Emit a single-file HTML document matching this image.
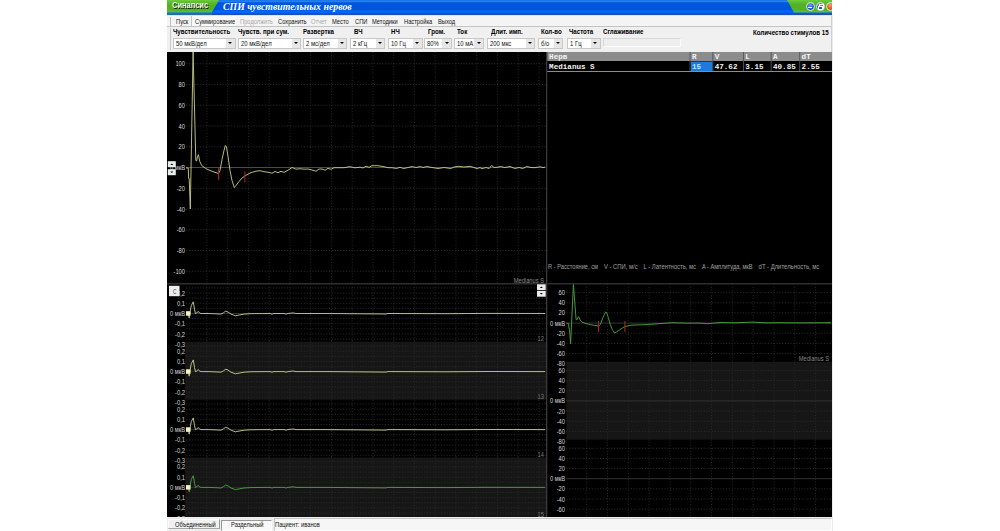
<!DOCTYPE html>
<html><head><meta charset="utf-8"><style>
html,body{margin:0;padding:0;background:#fff;width:1000px;height:531px;overflow:hidden;position:relative;font-family:"Liberation Sans",sans-serif}
.abs{position:absolute}
.lbl{font-family:"Liberation Sans",sans-serif}
.mono{font-family:"Liberation Mono",monospace;font-weight:bold;font-size:7.6px}
.t{position:absolute;white-space:nowrap;transform-origin:0 0;line-height:1}
.menu{font-size:7px;color:#111;transform:scaleX(.82)}
.dis{color:#a8a8a8}
.cl{font-size:7px;font-weight:bold;color:#000;transform:scaleX(.88)}
.combo{position:absolute;top:38.4px;height:10.2px;background:#fff;box-sizing:border-box;border:1px solid #c8c8c8}
.combo .v{position:absolute;left:2px;top:0.8px;font-size:7px;color:#111;white-space:nowrap;transform-origin:0 0;transform:scaleX(.85)}
.combo .b{position:absolute;right:0;top:0;width:8.5px;height:8.2px;background:#e6e6e6}
.combo .b:after{content:"";position:absolute;left:2.2px;top:3px;border-left:2.1px solid transparent;border-right:2.1px solid transparent;border-top:2.6px solid #000}
</style></head><body>
<div class="abs" style="left:167px;top:0;width:665px;height:531px;background:#f0f0f0"></div><div class="abs" style="left:167px;top:0;width:665px;height:12.5px;background:linear-gradient(#1a74e2 0px,#2480f2 1.5px,#0056de 2.8px,#0054dc 9.5px,#0066fa 11px,#0064f6 12.5px)"></div><div class="abs" style="left:167px;top:12.5px;width:665px;height:2px;background:#2050b4"></div><div class="abs" style="left:167px;top:12.5px;width:45px;height:2px;background:#2a6aa8"></div><div class="abs" style="left:167px;top:14.5px;width:665px;height:1px;background:#dce2f4"></div><div class="abs" style="left:167px;top:0;width:52px;height:12.5px;background:linear-gradient(#6ccc40 0px,#5cc030 2px,#52b024 5px,#54b226 10px,#66c040 12.5px);clip-path:polygon(0 0,100% 0,86% 100%,0 100%)"></div><div class="abs" style="left:787px;top:0;width:45px;height:12.5px;background:linear-gradient(#6ccc40 0px,#5cc030 2px,#52b024 5px,#54b226 10px,#66c040 12.5px);clip-path:polygon(0 0,100% 0,100% 100%,15.5% 100%)"></div><div class="t" style="left:171.7px;top:0.8px;font-size:8.6px;font-weight:bold;color:#f6ffe8;text-shadow:0.9px 0.9px 0 #081400;transform:scaleX(0.87)">Синапсис</div><div class="t" style="left:223px;top:2.2px;font-family:'Liberation Serif',serif;font-size:9.8px;font-style:italic;font-weight:bold;color:#fff">СПИ чувствительных нервов</div><div class="abs" style="left:805.5px;top:2.2px;width:9px;height:9px;box-sizing:border-box;border-radius:50%;background:radial-gradient(circle at 45% 30%,#6f9cf5,#1d4fc8 70%);border:0.8px solid #d6f0d0"></div><div class="abs" style="left:816px;top:2.2px;width:9px;height:9px;box-sizing:border-box;border-radius:50%;background:radial-gradient(circle at 45% 30%,#6f9cf5,#1d4fc8 70%);border:0.8px solid #d6f0d0"></div><div class="abs" style="left:825.5px;top:2.2px;width:9px;height:9px;box-sizing:border-box;border-radius:50%;background:radial-gradient(circle at 45% 30%,#f2a070,#d2501c 70%);border:0.8px solid #d6f0d0"></div><div class="abs" style="left:808px;top:7.2px;width:4px;height:1.2px;background:#fff"></div><div class="abs" style="left:819.2px;top:4.4px;width:2.6px;height:2.2px;border:0.7px solid #fff;border-top-width:1px"></div><div class="abs" style="left:818px;top:5.8px;width:2.6px;height:2.2px;border:0.7px solid #fff;border-top-width:1px;background:#2556c8"></div><div class="abs" style="left:832px;top:0;width:168px;height:531px;background:#fff"></div><div class="abs" style="left:167px;top:15.5px;width:665px;height:11px;background:#f4f4f4"></div><div class="abs" style="left:167px;top:26.3px;width:665px;height:1px;background:#c4c4c4"></div><div class="abs" style="left:170.3px;top:16.5px;width:1px;height:9px;background:#c0c0c0"></div><div class="abs" style="left:191.3px;top:15.5px;width:44.7px;height:10.8px;box-sizing:border-box;background:#f9f9f9;border-left:1px solid #c4c4c4;border-right:1px solid #fdfdfd"></div><div class="t menu" style="left:176px;top:18px">Пуск</div><div class="t menu" style="left:195px;top:18px">Суммирование</div><div class="t menu dis" style="left:240px;top:18px">Продолжить</div><div class="t menu" style="left:278px;top:18px">Сохранить</div><div class="t menu dis" style="left:310.7px;top:18px">Отчет</div><div class="t menu" style="left:331.8px;top:18px">Место</div><div class="t menu" style="left:354.6px;top:18px">СПИ</div><div class="t menu" style="left:372px;top:18px">Методики</div><div class="t menu" style="left:404.2px;top:18px">Настройка</div><div class="t menu" style="left:437.9px;top:18px">Выход</div><div class="abs" style="left:170.3px;top:28px;width:1px;height:22px;background:#c8c8c8"></div><div class="t cl" style="left:173.2px;top:28.2px">Чувствительность</div><div class="t cl" style="left:238px;top:28.2px">Чувств. при сум.</div><div class="t cl" style="left:303px;top:28.2px">Развертка</div><div class="t cl" style="left:353.8px;top:28.2px">ВЧ</div><div class="t cl" style="left:390.9px;top:28.2px">НЧ</div><div class="t cl" style="left:428.3px;top:28.2px">Гром.</div><div class="t cl" style="left:457.2px;top:28.2px">Ток</div><div class="t cl" style="left:491px;top:28.2px">Длит. имп.</div><div class="t cl" style="left:540.7px;top:28.2px">Кол-во</div><div class="t cl" style="left:568.6px;top:28.2px">Частота</div><div class="t cl" style="left:603px;top:28.2px">Сглаживание</div><div class="combo" style="left:173.2px;width:62.4px"><div class="v">50 мкВ/дел</div><div class="b"></div></div><div class="combo" style="left:238px;width:63px"><div class="v">20 мкВ/дел</div><div class="b"></div></div><div class="combo" style="left:303px;width:44px"><div class="v">2 мс/дел</div><div class="b"></div></div><div class="combo" style="left:350px;width:35.3px"><div class="v">2 кГц</div><div class="b"></div></div><div class="combo" style="left:387.5px;width:35.2px"><div class="v">10 Гц</div><div class="b"></div></div><div class="combo" style="left:424.4px;width:27.6px"><div class="v">80%</div><div class="b"></div></div><div class="combo" style="left:454.1px;width:29.9px"><div class="v">10 мА</div><div class="b"></div></div><div class="combo" style="left:487px;width:48px"><div class="v">200 мкс</div><div class="b"></div></div><div class="combo" style="left:537.6px;width:25.9px"><div class="v">б/о</div><div class="b"></div></div><div class="combo" style="left:566.5px;width:34px"><div class="v">1 Гц</div><div class="b"></div></div><div class="abs" style="left:603px;top:38.4px;width:78px;height:9px;box-sizing:border-box;border:1px solid #d8d8d8;border-right-color:#fafafa;border-bottom-color:#fafafa;background:#eeeeee"></div><div class="t cl" style="left:752.6px;top:28.7px">Количество стимулов 15</div><div class="abs" style="left:831px;top:14.5px;width:1px;height:37.5px;background:#d0d0d0"></div><svg width="1000" height="531" viewBox="0 0 1000 531" style="position:absolute;left:0;top:0"><rect x="167" y="52" width="665" height="465" fill="#000"/><path d="M206.95,52V282.5M227.7,52V282.5M248.45,52V282.5M269.2,52V282.5M289.95,52V282.5M310.7,52V282.5M331.45,52V282.5M352.2,52V282.5M372.95,52V282.5M393.7,52V282.5M414.45,52V282.5M435.2,52V282.5M455.95,52V282.5M476.7,52V282.5M497.45,52V282.5M518.2,52V282.5M538.95,52V282.5" stroke="#282828" stroke-width="1" stroke-dasharray="1,1.8" fill="none"/><path d="M186.2,271.25H546" stroke="#282828" stroke-width="1" stroke-dasharray="1.2,1.6" fill="none"/><path d="M186.2,250.5H546" stroke="#282828" stroke-width="1" stroke-dasharray="1.2,1.6" fill="none"/><path d="M186.2,229.75H546" stroke="#282828" stroke-width="1" stroke-dasharray="1.2,1.6" fill="none"/><path d="M186.2,209H546" stroke="#282828" stroke-width="1" stroke-dasharray="1.2,1.6" fill="none"/><path d="M186.2,188.25H546" stroke="#282828" stroke-width="1" stroke-dasharray="1.2,1.6" fill="none"/><path d="M186.2,167.5H546" stroke="#4a4a4a" stroke-width="1"  fill="none"/><path d="M186.2,146.75H546" stroke="#282828" stroke-width="1" stroke-dasharray="1.2,1.6" fill="none"/><path d="M186.2,126H546" stroke="#282828" stroke-width="1" stroke-dasharray="1.2,1.6" fill="none"/><path d="M186.2,105.25H546" stroke="#282828" stroke-width="1" stroke-dasharray="1.2,1.6" fill="none"/><path d="M186.2,84.5H546" stroke="#282828" stroke-width="1" stroke-dasharray="1.2,1.6" fill="none"/><path d="M186.2,63.75H546" stroke="#282828" stroke-width="1" stroke-dasharray="1.2,1.6" fill="none"/><text x="185" y="66.25" text-anchor="end" class="lbl" fill="#d8d8d8" font-size="7" textLength="9.58" lengthAdjust="spacingAndGlyphs">100</text><text x="185" y="87" text-anchor="end" class="lbl" fill="#d8d8d8" font-size="7" textLength="6.38" lengthAdjust="spacingAndGlyphs">80</text><text x="185" y="107.75" text-anchor="end" class="lbl" fill="#d8d8d8" font-size="7" textLength="6.38" lengthAdjust="spacingAndGlyphs">60</text><text x="185" y="128.5" text-anchor="end" class="lbl" fill="#d8d8d8" font-size="7" textLength="6.38" lengthAdjust="spacingAndGlyphs">40</text><text x="185" y="149.25" text-anchor="end" class="lbl" fill="#d8d8d8" font-size="7" textLength="6.38" lengthAdjust="spacingAndGlyphs">20</text><text x="185" y="190.75" text-anchor="end" class="lbl" fill="#d8d8d8" font-size="7" textLength="8.3" lengthAdjust="spacingAndGlyphs">-20</text><text x="185" y="211.5" text-anchor="end" class="lbl" fill="#d8d8d8" font-size="7" textLength="8.3" lengthAdjust="spacingAndGlyphs">-40</text><text x="185" y="232.25" text-anchor="end" class="lbl" fill="#d8d8d8" font-size="7" textLength="8.3" lengthAdjust="spacingAndGlyphs">-60</text><text x="185" y="253" text-anchor="end" class="lbl" fill="#d8d8d8" font-size="7" textLength="8.3" lengthAdjust="spacingAndGlyphs">-80</text><text x="185" y="273.75" text-anchor="end" class="lbl" fill="#d8d8d8" font-size="7" textLength="11.49" lengthAdjust="spacingAndGlyphs">-100</text><text x="185" y="170" text-anchor="end" class="lbl" fill="#d8d8d8" font-size="7" textLength="15.07" lengthAdjust="spacingAndGlyphs">0 мкВ</text><path d="M186,167.8 L188.3,168.1 L188.6,178.4 L189.2,178.5 L190.3,209 L193.1,52 L195.8,160.5 L196.6,161 L197.5,156.5 L198.4,154.7 L199.8,161.5 L201.7,165.5 L205.7,168.5 L210,170.5 L214,172 L218.6,173.5 L220,170.5 L222,159.5 L224,150.5 L225.3,145.5 L226.5,147 L228,156.5 L230,170.5 L232,180.5 L234.3,187.5 L236,185.5 L239,181.5 L242,178 L244.8,176 L250,173 L256,171.2 L260,170.7 L264,171.7 L268,172.2 L272,173.2 L275,171.5 L278,172.7 L281,171.3 L284,172.3 L288,170.2 L292,167.5 L296,169.2 L300,168.7 L304,169.2 L308,169 L311,169.7 L316,171.2 L319,169 L322,169 L325,170.3 L328,168.3 L331,169.3 L334,167.7 L344,167.7 L350,166.7 L355,167.8 L360,167.2 L363,168 L366,166.2 L369,167.3 L372,165.7 L378,165.7 L384,166.7 L388,167.7 L392,167.7 L396.4,168.5 L400,167.3 L403.6,168.5 L408,167.5 L412.4,166.5 L416,167.5 L420.4,166.5 L423,167.5 L426.8,166.5 L432,167.5 L438,168.5 L444,167.5 L450.8,168.5 L454,167 L458.8,166.3 L464,167 L470,166.3 L474,167.5 L477.2,168.7 L480,167.5 L482,168.7 L486,167.5 L489.2,168.5 L491.6,165.5 L494,167.5 L497,167.3 L500.4,166.5 L505,167.5 L510,166.5 L514.8,168.5 L519,167.5 L522.8,168.5 L526.8,166.5 L531,167.5 L535,167.7 L540.4,166.7 L543,167.7 L545,167" stroke="#c4c484" stroke-width="0.95" fill="none" stroke-linejoin="round"/><path d="M218.6,168V180M244.9,171.5V182.5" stroke="#9a2828" stroke-width="1.1"/><text x="544" y="283" text-anchor="end" class="lbl" fill="#8a8a8a" font-size="7" textLength="30.31" lengthAdjust="spacingAndGlyphs">Medianus S</text><rect x="167" y="283" width="379" height="1.5" fill="#2e2e2e"/><rect x="185.2" y="341.7" width="360.8" height="58.1" fill="#161616"/><rect x="185.2" y="457.5" width="360.8" height="59.5" fill="#161616"/><path d="M206.95,284V341.7M227.7,284V341.7M248.45,284V341.7M269.2,284V341.7M289.95,284V341.7M310.7,284V341.7M331.45,284V341.7M352.2,284V341.7M372.95,284V341.7M393.7,284V341.7M414.45,284V341.7M435.2,284V341.7M455.95,284V341.7M476.7,284V341.7M497.45,284V341.7M518.2,284V341.7M538.95,284V341.7" stroke="#282828" stroke-width="1" stroke-dasharray="1,1.8" fill="none"/><path d="M186.2,287.9H546" stroke="#282828" stroke-width="1" stroke-dasharray="1.2,1.6" fill="none"/><path d="M186.2,293.02H546" stroke="#282828" stroke-width="1" stroke-dasharray="1.2,1.6" fill="none"/><path d="M186.2,298.14H546" stroke="#282828" stroke-width="1" stroke-dasharray="1.2,1.6" fill="none"/><path d="M186.2,303.26H546" stroke="#282828" stroke-width="1" stroke-dasharray="1.2,1.6" fill="none"/><path d="M186.2,308.38H546" stroke="#282828" stroke-width="1" stroke-dasharray="1.2,1.6" fill="none"/><path d="M186.2,318.62H546" stroke="#282828" stroke-width="1" stroke-dasharray="1.2,1.6" fill="none"/><path d="M186.2,323.74H546" stroke="#282828" stroke-width="1" stroke-dasharray="1.2,1.6" fill="none"/><path d="M186.2,328.86H546" stroke="#282828" stroke-width="1" stroke-dasharray="1.2,1.6" fill="none"/><path d="M186.2,333.98H546" stroke="#282828" stroke-width="1" stroke-dasharray="1.2,1.6" fill="none"/><path d="M186.2,339.1H546" stroke="#282828" stroke-width="1" stroke-dasharray="1.2,1.6" fill="none"/><path d="M186.2,313.5H546" stroke="#2e2e2e" stroke-width="1"  fill="none"/><path d="M206.95,341.7V399.8M227.7,341.7V399.8M248.45,341.7V399.8M269.2,341.7V399.8M289.95,341.7V399.8M310.7,341.7V399.8M331.45,341.7V399.8M352.2,341.7V399.8M372.95,341.7V399.8M393.7,341.7V399.8M414.45,341.7V399.8M435.2,341.7V399.8M455.95,341.7V399.8M476.7,341.7V399.8M497.45,341.7V399.8M518.2,341.7V399.8M538.95,341.7V399.8" stroke="#282828" stroke-width="1" stroke-dasharray="1,1.8" fill="none"/><path d="M186.2,346H546" stroke="#282828" stroke-width="1" stroke-dasharray="1.2,1.6" fill="none"/><path d="M186.2,351.12H546" stroke="#282828" stroke-width="1" stroke-dasharray="1.2,1.6" fill="none"/><path d="M186.2,356.24H546" stroke="#282828" stroke-width="1" stroke-dasharray="1.2,1.6" fill="none"/><path d="M186.2,361.36H546" stroke="#282828" stroke-width="1" stroke-dasharray="1.2,1.6" fill="none"/><path d="M186.2,366.48H546" stroke="#282828" stroke-width="1" stroke-dasharray="1.2,1.6" fill="none"/><path d="M186.2,376.72H546" stroke="#282828" stroke-width="1" stroke-dasharray="1.2,1.6" fill="none"/><path d="M186.2,381.84H546" stroke="#282828" stroke-width="1" stroke-dasharray="1.2,1.6" fill="none"/><path d="M186.2,386.96H546" stroke="#282828" stroke-width="1" stroke-dasharray="1.2,1.6" fill="none"/><path d="M186.2,392.08H546" stroke="#282828" stroke-width="1" stroke-dasharray="1.2,1.6" fill="none"/><path d="M186.2,397.2H546" stroke="#282828" stroke-width="1" stroke-dasharray="1.2,1.6" fill="none"/><path d="M186.2,371.6H546" stroke="#2e2e2e" stroke-width="1"  fill="none"/><path d="M206.95,399.8V457.5M227.7,399.8V457.5M248.45,399.8V457.5M269.2,399.8V457.5M289.95,399.8V457.5M310.7,399.8V457.5M331.45,399.8V457.5M352.2,399.8V457.5M372.95,399.8V457.5M393.7,399.8V457.5M414.45,399.8V457.5M435.2,399.8V457.5M455.95,399.8V457.5M476.7,399.8V457.5M497.45,399.8V457.5M518.2,399.8V457.5M538.95,399.8V457.5" stroke="#282828" stroke-width="1" stroke-dasharray="1,1.8" fill="none"/><path d="M186.2,404H546" stroke="#282828" stroke-width="1" stroke-dasharray="1.2,1.6" fill="none"/><path d="M186.2,409.12H546" stroke="#282828" stroke-width="1" stroke-dasharray="1.2,1.6" fill="none"/><path d="M186.2,414.24H546" stroke="#282828" stroke-width="1" stroke-dasharray="1.2,1.6" fill="none"/><path d="M186.2,419.36H546" stroke="#282828" stroke-width="1" stroke-dasharray="1.2,1.6" fill="none"/><path d="M186.2,424.48H546" stroke="#282828" stroke-width="1" stroke-dasharray="1.2,1.6" fill="none"/><path d="M186.2,434.72H546" stroke="#282828" stroke-width="1" stroke-dasharray="1.2,1.6" fill="none"/><path d="M186.2,439.84H546" stroke="#282828" stroke-width="1" stroke-dasharray="1.2,1.6" fill="none"/><path d="M186.2,444.96H546" stroke="#282828" stroke-width="1" stroke-dasharray="1.2,1.6" fill="none"/><path d="M186.2,450.08H546" stroke="#282828" stroke-width="1" stroke-dasharray="1.2,1.6" fill="none"/><path d="M186.2,455.2H546" stroke="#282828" stroke-width="1" stroke-dasharray="1.2,1.6" fill="none"/><path d="M186.2,429.6H546" stroke="#2e2e2e" stroke-width="1"  fill="none"/><path d="M206.95,457.5V517M227.7,457.5V517M248.45,457.5V517M269.2,457.5V517M289.95,457.5V517M310.7,457.5V517M331.45,457.5V517M352.2,457.5V517M372.95,457.5V517M393.7,457.5V517M414.45,457.5V517M435.2,457.5V517M455.95,457.5V517M476.7,457.5V517M497.45,457.5V517M518.2,457.5V517M538.95,457.5V517" stroke="#282828" stroke-width="1" stroke-dasharray="1,1.8" fill="none"/><path d="M186.2,461.8H546" stroke="#282828" stroke-width="1" stroke-dasharray="1.2,1.6" fill="none"/><path d="M186.2,466.92H546" stroke="#282828" stroke-width="1" stroke-dasharray="1.2,1.6" fill="none"/><path d="M186.2,472.04H546" stroke="#282828" stroke-width="1" stroke-dasharray="1.2,1.6" fill="none"/><path d="M186.2,477.16H546" stroke="#282828" stroke-width="1" stroke-dasharray="1.2,1.6" fill="none"/><path d="M186.2,482.28H546" stroke="#282828" stroke-width="1" stroke-dasharray="1.2,1.6" fill="none"/><path d="M186.2,492.52H546" stroke="#282828" stroke-width="1" stroke-dasharray="1.2,1.6" fill="none"/><path d="M186.2,497.64H546" stroke="#282828" stroke-width="1" stroke-dasharray="1.2,1.6" fill="none"/><path d="M186.2,502.76H546" stroke="#282828" stroke-width="1" stroke-dasharray="1.2,1.6" fill="none"/><path d="M186.2,507.88H546" stroke="#282828" stroke-width="1" stroke-dasharray="1.2,1.6" fill="none"/><path d="M186.2,513H546" stroke="#282828" stroke-width="1" stroke-dasharray="1.2,1.6" fill="none"/><path d="M186.2,487.4H546" stroke="#2e2e2e" stroke-width="1"  fill="none"/><text x="185" y="295.5" text-anchor="end" class="lbl" fill="#d8d8d8" font-size="7" textLength="7.98" lengthAdjust="spacingAndGlyphs">0,2</text><text x="185" y="305.75" text-anchor="end" class="lbl" fill="#d8d8d8" font-size="7" textLength="7.98" lengthAdjust="spacingAndGlyphs">0,1</text><text x="185" y="326.25" text-anchor="end" class="lbl" fill="#d8d8d8" font-size="7" textLength="9.89" lengthAdjust="spacingAndGlyphs">-0,1</text><text x="185" y="336.5" text-anchor="end" class="lbl" fill="#d8d8d8" font-size="7" textLength="9.89" lengthAdjust="spacingAndGlyphs">-0,2</text><text x="185" y="346.75" text-anchor="end" class="lbl" fill="#d8d8d8" font-size="7" textLength="9.89" lengthAdjust="spacingAndGlyphs">-0,3</text><text x="185" y="316" text-anchor="end" class="lbl" fill="#d8d8d8" font-size="7" textLength="15.07" lengthAdjust="spacingAndGlyphs">0 мкВ</text><text x="544" y="341.2" text-anchor="end" class="lbl" fill="#7a7a7a" font-size="7" textLength="6.38" lengthAdjust="spacingAndGlyphs">12</text><path d="M186,313.5 L187.5,313.5 L188.5,314.5 L189.2,318 L190.2,311.5 L191.3,305.5 L193.3,301.8 L194.5,309.5 L195.5,313.7 L196.2,313.2 L198.4,311.5 L199.5,313 L201,313.5 L208,313.5 L216,313.8 L221,314.1 L223.5,312.7 L225.8,311.1 L228,312 L231,314.1 L235.4,315.7 L239,315 L244,314.1 L250,313.7 L256,313.6 L270,313.5 L272,314.1 L274,313.5 L284,313.5 L286,314.1 L288,313.5 L293,312.9 L296,313.5 L326,313.5 L386,314 L388,313.5 L446,313.7 L486,313.4 L545,313.5" stroke="#c4c484" stroke-width="0.95" fill="none"/><rect x="186" y="311.2" width="4.5" height="4.5" fill="#f2f2c8"/><text x="185" y="353.6" text-anchor="end" class="lbl" fill="#d8d8d8" font-size="7" textLength="7.98" lengthAdjust="spacingAndGlyphs">0,2</text><text x="185" y="363.85" text-anchor="end" class="lbl" fill="#d8d8d8" font-size="7" textLength="7.98" lengthAdjust="spacingAndGlyphs">0,1</text><text x="185" y="384.35" text-anchor="end" class="lbl" fill="#d8d8d8" font-size="7" textLength="9.89" lengthAdjust="spacingAndGlyphs">-0,1</text><text x="185" y="394.6" text-anchor="end" class="lbl" fill="#d8d8d8" font-size="7" textLength="9.89" lengthAdjust="spacingAndGlyphs">-0,2</text><text x="185" y="404.85" text-anchor="end" class="lbl" fill="#d8d8d8" font-size="7" textLength="9.89" lengthAdjust="spacingAndGlyphs">-0,3</text><text x="185" y="374.1" text-anchor="end" class="lbl" fill="#d8d8d8" font-size="7" textLength="15.07" lengthAdjust="spacingAndGlyphs">0 мкВ</text><text x="544" y="399.3" text-anchor="end" class="lbl" fill="#7a7a7a" font-size="7" textLength="6.38" lengthAdjust="spacingAndGlyphs">13</text><path d="M186,371.6 L187.5,371.6 L188.5,372.6 L189.2,376.1 L190.2,369.6 L191.3,363.6 L193.3,359.9 L194.5,367.6 L195.5,371.8 L196.2,371.3 L198.4,369.6 L199.5,371.1 L201,371.6 L208,371.6 L216,371.9 L221,372.2 L223.5,370.8 L225.8,369.2 L228,370.1 L231,372.2 L235.4,373.8 L239,373.1 L244,372.2 L250,371.8 L256,371.7 L270,371.6 L272,372.2 L274,371.6 L284,371.6 L286,372.2 L288,371.6 L293,371 L296,371.6 L326,371.6 L386,372.1 L388,371.6 L446,371.8 L486,371.5 L545,371.6" stroke="#c4c484" stroke-width="0.95" fill="none"/><rect x="186" y="369.3" width="4.5" height="4.5" fill="#f2f2c8"/><text x="185" y="411.6" text-anchor="end" class="lbl" fill="#d8d8d8" font-size="7" textLength="7.98" lengthAdjust="spacingAndGlyphs">0,2</text><text x="185" y="421.85" text-anchor="end" class="lbl" fill="#d8d8d8" font-size="7" textLength="7.98" lengthAdjust="spacingAndGlyphs">0,1</text><text x="185" y="442.35" text-anchor="end" class="lbl" fill="#d8d8d8" font-size="7" textLength="9.89" lengthAdjust="spacingAndGlyphs">-0,1</text><text x="185" y="452.6" text-anchor="end" class="lbl" fill="#d8d8d8" font-size="7" textLength="9.89" lengthAdjust="spacingAndGlyphs">-0,2</text><text x="185" y="462.85" text-anchor="end" class="lbl" fill="#d8d8d8" font-size="7" textLength="9.89" lengthAdjust="spacingAndGlyphs">-0,3</text><text x="185" y="432.1" text-anchor="end" class="lbl" fill="#d8d8d8" font-size="7" textLength="15.07" lengthAdjust="spacingAndGlyphs">0 мкВ</text><text x="544" y="457" text-anchor="end" class="lbl" fill="#7a7a7a" font-size="7" textLength="6.38" lengthAdjust="spacingAndGlyphs">14</text><path d="M186,429.6 L187.5,429.6 L188.5,430.6 L189.2,434.1 L190.2,427.6 L191.3,421.6 L193.3,417.9 L194.5,425.6 L195.5,429.8 L196.2,429.3 L198.4,427.6 L199.5,429.1 L201,429.6 L208,429.6 L216,429.9 L221,430.2 L223.5,428.8 L225.8,427.2 L228,428.1 L231,430.2 L235.4,431.8 L239,431.1 L244,430.2 L250,429.8 L256,429.7 L270,429.6 L272,430.2 L274,429.6 L284,429.6 L286,430.2 L288,429.6 L293,429 L296,429.6 L326,429.6 L386,430.1 L388,429.6 L446,429.8 L486,429.5 L545,429.6" stroke="#c4c484" stroke-width="0.95" fill="none"/><rect x="186" y="427.3" width="4.5" height="4.5" fill="#f2f2c8"/><text x="185" y="469.4" text-anchor="end" class="lbl" fill="#d8d8d8" font-size="7" textLength="7.98" lengthAdjust="spacingAndGlyphs">0,2</text><text x="185" y="479.65" text-anchor="end" class="lbl" fill="#d8d8d8" font-size="7" textLength="7.98" lengthAdjust="spacingAndGlyphs">0,1</text><text x="185" y="500.15" text-anchor="end" class="lbl" fill="#d8d8d8" font-size="7" textLength="9.89" lengthAdjust="spacingAndGlyphs">-0,1</text><text x="185" y="510.4" text-anchor="end" class="lbl" fill="#d8d8d8" font-size="7" textLength="9.89" lengthAdjust="spacingAndGlyphs">-0,2</text><text x="185" y="520.65" text-anchor="end" class="lbl" fill="#d8d8d8" font-size="7" textLength="9.89" lengthAdjust="spacingAndGlyphs">-0,3</text><text x="185" y="489.9" text-anchor="end" class="lbl" fill="#d8d8d8" font-size="7" textLength="15.07" lengthAdjust="spacingAndGlyphs">0 мкВ</text><text x="544" y="516.5" text-anchor="end" class="lbl" fill="#7a7a7a" font-size="7" textLength="6.38" lengthAdjust="spacingAndGlyphs">15</text><path d="M186,487.4 L187.5,487.4 L188.5,488.4 L189.2,491.9 L190.2,485.4 L191.3,479.4 L193.3,475.7 L194.5,483.4 L195.5,487.6 L196.2,487.1 L198.4,485.4 L199.5,486.9 L201,487.4 L208,487.4 L216,487.7 L221,488 L223.5,486.6 L225.8,485 L228,485.9 L231,488 L235.4,489.6 L239,488.9 L244,488 L250,487.6 L256,487.5 L270,487.4 L272,488 L274,487.4 L284,487.4 L286,488 L288,487.4 L293,486.8 L296,487.4 L326,487.4 L386,487.9 L388,487.4 L446,487.6 L486,487.3 L545,487.4" stroke="#4a9e3c" stroke-width="0.95" fill="none"/><rect x="186" y="485.1" width="4.5" height="4.5" fill="#f2f2c8"/><rect x="169" y="285.8" width="10.5" height="10.4" fill="#ececec"/><text x="172.9" y="293.9" font-size="7" fill="#3a3a3a" class="lbl" textLength="3.4" lengthAdjust="spacingAndGlyphs">C</text><rect x="167.8" y="161.2" width="8" height="6" fill="#ececec"/><path d="M170.3,165L173.3,165L171.8,163.4Z" fill="#000"/><rect x="167.8" y="169.2" width="8" height="6" fill="#ececec"/><path d="M170.3,171.4L173.3,171.4L171.8,173Z" fill="#000"/><rect x="537" y="284.3" width="8.7" height="5.8" fill="#ececec"/><path d="M539.85,288L542.85,288L541.35,286.4Z" fill="#000"/><rect x="537" y="290.9" width="8.7" height="5.8" fill="#ececec"/><path d="M539.85,293L542.85,293L541.35,294.6Z" fill="#000"/><rect x="546" y="52" width="1.3" height="465" fill="#3a3a3a"/><rect x="547.3" y="52" width="284.7" height="9" fill="#8c8c8c"/><rect x="547.3" y="71" width="284.7" height="1" fill="#8c8c8c"/><rect x="689.6" y="52" width="0.9" height="19" fill="#555"/><rect x="712.4" y="52" width="0.9" height="19" fill="#555"/><rect x="743" y="52" width="0.9" height="19" fill="#555"/><rect x="770.7" y="52" width="0.9" height="19" fill="#555"/><rect x="799.3" y="52" width="0.9" height="19" fill="#555"/><rect x="691" y="61.5" width="21.4" height="9.5" fill="#1d7be0"/><text x="549.1" y="59.3" class="mono" fill="#f4f4f4">Нерв</text><text x="549.1" y="69.3" class="mono" fill="#f0f0f0">Medianus S</text><text x="691.9" y="59.3" class="mono" fill="#f4f4f4">R</text><text x="691.9" y="69.3" class="mono" fill="#bfe0ff">15</text><text x="714.7" y="59.3" class="mono" fill="#f4f4f4">V</text><text x="714.7" y="69.3" class="mono" fill="#f0f0f0">47.62</text><text x="745.3" y="59.3" class="mono" fill="#f4f4f4">L</text><text x="745.3" y="69.3" class="mono" fill="#f0f0f0">3.15</text><text x="773" y="59.3" class="mono" fill="#f4f4f4">A</text><text x="773" y="69.3" class="mono" fill="#f0f0f0">40.85</text><text x="801.6" y="59.3" class="mono" fill="#f4f4f4">dT</text><text x="801.6" y="69.3" class="mono" fill="#f0f0f0">2.55</text><text x="548" y="269" class="lbl" fill="#a0a0a0" font-size="7" textLength="50" lengthAdjust="spacingAndGlyphs">R - Расстояние, см</text><text x="604" y="269" class="lbl" fill="#a0a0a0" font-size="7" textLength="33.6" lengthAdjust="spacingAndGlyphs">V - СПИ, м/с</text><text x="643.6" y="269" class="lbl" fill="#a0a0a0" font-size="7" textLength="52.4" lengthAdjust="spacingAndGlyphs">L - Латентность, мс</text><text x="702" y="269" class="lbl" fill="#a0a0a0" font-size="7" textLength="50.6" lengthAdjust="spacingAndGlyphs">A - Амплитуда, мкВ</text><text x="758.6" y="269" class="lbl" fill="#a0a0a0" font-size="7" textLength="60.7" lengthAdjust="spacingAndGlyphs">dT - Длительность, мс</text><rect x="547.3" y="283" width="284.7" height="1.5" fill="#2e2e2e"/><rect x="566.4" y="361.8" width="265.6" height="77.8" fill="#161616"/><path d="M586.7,284V361.8M607.5,284V361.8M628.3,284V361.8M649.1,284V361.8M669.9,284V361.8M690.7,284V361.8M711.5,284V361.8M732.3,284V361.8M753.1,284V361.8M773.9,284V361.8M794.7,284V361.8M815.5,284V361.8" stroke="#282828" stroke-width="1" stroke-dasharray="1,1.8" fill="none"/><path d="M566.4,292.65H832" stroke="#282828" stroke-width="1" stroke-dasharray="1.2,1.6" fill="none"/><path d="M566.4,302.8H832" stroke="#282828" stroke-width="1" stroke-dasharray="1.2,1.6" fill="none"/><path d="M566.4,312.95H832" stroke="#282828" stroke-width="1" stroke-dasharray="1.2,1.6" fill="none"/><path d="M566.4,333.25H832" stroke="#282828" stroke-width="1" stroke-dasharray="1.2,1.6" fill="none"/><path d="M566.4,343.4H832" stroke="#282828" stroke-width="1" stroke-dasharray="1.2,1.6" fill="none"/><path d="M566.4,353.55H832" stroke="#282828" stroke-width="1" stroke-dasharray="1.2,1.6" fill="none"/><path d="M566.4,323.1H832" stroke="#333" stroke-width="1"  fill="none"/><path d="M586.7,361.8V439.6M607.5,361.8V439.6M628.3,361.8V439.6M649.1,361.8V439.6M669.9,361.8V439.6M690.7,361.8V439.6M711.5,361.8V439.6M732.3,361.8V439.6M753.1,361.8V439.6M773.9,361.8V439.6M794.7,361.8V439.6M815.5,361.8V439.6" stroke="#282828" stroke-width="1" stroke-dasharray="1,1.8" fill="none"/><path d="M566.4,370.45H832" stroke="#282828" stroke-width="1" stroke-dasharray="1.2,1.6" fill="none"/><path d="M566.4,380.6H832" stroke="#282828" stroke-width="1" stroke-dasharray="1.2,1.6" fill="none"/><path d="M566.4,390.75H832" stroke="#282828" stroke-width="1" stroke-dasharray="1.2,1.6" fill="none"/><path d="M566.4,411.05H832" stroke="#282828" stroke-width="1" stroke-dasharray="1.2,1.6" fill="none"/><path d="M566.4,421.2H832" stroke="#282828" stroke-width="1" stroke-dasharray="1.2,1.6" fill="none"/><path d="M566.4,431.35H832" stroke="#282828" stroke-width="1" stroke-dasharray="1.2,1.6" fill="none"/><path d="M566.4,400.9H832" stroke="#333" stroke-width="1"  fill="none"/><path d="M586.7,439.6V517M607.5,439.6V517M628.3,439.6V517M649.1,439.6V517M669.9,439.6V517M690.7,439.6V517M711.5,439.6V517M732.3,439.6V517M753.1,439.6V517M773.9,439.6V517M794.7,439.6V517M815.5,439.6V517" stroke="#282828" stroke-width="1" stroke-dasharray="1,1.8" fill="none"/><path d="M566.4,448.25H832" stroke="#282828" stroke-width="1" stroke-dasharray="1.2,1.6" fill="none"/><path d="M566.4,458.4H832" stroke="#282828" stroke-width="1" stroke-dasharray="1.2,1.6" fill="none"/><path d="M566.4,468.55H832" stroke="#282828" stroke-width="1" stroke-dasharray="1.2,1.6" fill="none"/><path d="M566.4,488.85H832" stroke="#282828" stroke-width="1" stroke-dasharray="1.2,1.6" fill="none"/><path d="M566.4,499H832" stroke="#282828" stroke-width="1" stroke-dasharray="1.2,1.6" fill="none"/><path d="M566.4,509.15H832" stroke="#282828" stroke-width="1" stroke-dasharray="1.2,1.6" fill="none"/><path d="M566.4,478.7H832" stroke="#333" stroke-width="1"  fill="none"/><text x="565" y="295.15" text-anchor="end" class="lbl" fill="#d8d8d8" font-size="7" textLength="6.38" lengthAdjust="spacingAndGlyphs">60</text><text x="565" y="305.3" text-anchor="end" class="lbl" fill="#d8d8d8" font-size="7" textLength="6.38" lengthAdjust="spacingAndGlyphs">40</text><text x="565" y="315.45" text-anchor="end" class="lbl" fill="#d8d8d8" font-size="7" textLength="6.38" lengthAdjust="spacingAndGlyphs">20</text><text x="565" y="335.75" text-anchor="end" class="lbl" fill="#d8d8d8" font-size="7" textLength="8.3" lengthAdjust="spacingAndGlyphs">-20</text><text x="565" y="345.9" text-anchor="end" class="lbl" fill="#d8d8d8" font-size="7" textLength="8.3" lengthAdjust="spacingAndGlyphs">-40</text><text x="565" y="356.05" text-anchor="end" class="lbl" fill="#d8d8d8" font-size="7" textLength="8.3" lengthAdjust="spacingAndGlyphs">-60</text><text x="565" y="366.2" text-anchor="end" class="lbl" fill="#d8d8d8" font-size="7" textLength="8.3" lengthAdjust="spacingAndGlyphs">-80</text><text x="565" y="325.6" text-anchor="end" class="lbl" fill="#d8d8d8" font-size="7" textLength="15.07" lengthAdjust="spacingAndGlyphs">0 мкВ</text><text x="565" y="372.95" text-anchor="end" class="lbl" fill="#d8d8d8" font-size="7" textLength="6.38" lengthAdjust="spacingAndGlyphs">60</text><text x="565" y="383.1" text-anchor="end" class="lbl" fill="#d8d8d8" font-size="7" textLength="6.38" lengthAdjust="spacingAndGlyphs">40</text><text x="565" y="393.25" text-anchor="end" class="lbl" fill="#d8d8d8" font-size="7" textLength="6.38" lengthAdjust="spacingAndGlyphs">20</text><text x="565" y="413.55" text-anchor="end" class="lbl" fill="#d8d8d8" font-size="7" textLength="8.3" lengthAdjust="spacingAndGlyphs">-20</text><text x="565" y="423.7" text-anchor="end" class="lbl" fill="#d8d8d8" font-size="7" textLength="8.3" lengthAdjust="spacingAndGlyphs">-40</text><text x="565" y="433.85" text-anchor="end" class="lbl" fill="#d8d8d8" font-size="7" textLength="8.3" lengthAdjust="spacingAndGlyphs">-60</text><text x="565" y="444" text-anchor="end" class="lbl" fill="#d8d8d8" font-size="7" textLength="8.3" lengthAdjust="spacingAndGlyphs">-80</text><text x="565" y="403.4" text-anchor="end" class="lbl" fill="#d8d8d8" font-size="7" textLength="15.07" lengthAdjust="spacingAndGlyphs">0 мкВ</text><text x="565" y="450.75" text-anchor="end" class="lbl" fill="#d8d8d8" font-size="7" textLength="6.38" lengthAdjust="spacingAndGlyphs">60</text><text x="565" y="460.9" text-anchor="end" class="lbl" fill="#d8d8d8" font-size="7" textLength="6.38" lengthAdjust="spacingAndGlyphs">40</text><text x="565" y="471.05" text-anchor="end" class="lbl" fill="#d8d8d8" font-size="7" textLength="6.38" lengthAdjust="spacingAndGlyphs">20</text><text x="565" y="491.35" text-anchor="end" class="lbl" fill="#d8d8d8" font-size="7" textLength="8.3" lengthAdjust="spacingAndGlyphs">-20</text><text x="565" y="501.5" text-anchor="end" class="lbl" fill="#d8d8d8" font-size="7" textLength="8.3" lengthAdjust="spacingAndGlyphs">-40</text><text x="565" y="511.65" text-anchor="end" class="lbl" fill="#d8d8d8" font-size="7" textLength="8.3" lengthAdjust="spacingAndGlyphs">-60</text><text x="565" y="481.2" text-anchor="end" class="lbl" fill="#d8d8d8" font-size="7" textLength="15.07" lengthAdjust="spacingAndGlyphs">0 мкВ</text><path d="M566.3,323.25 L568.6,323.4 L568.9,328.55 L569.5,328.6 L570.6,343.85 L573.4,284.5 L576.1,319.6 L576.9,319.85 L577.8,317.6 L578.7,316.7 L580.1,320.1 L582,322.1 L586,323.6 L590.3,324.6 L594.3,325.35 L598.9,326.1 L600.3,324.6 L602.3,319.1 L604.3,314.6 L605.6,312.1 L606.8,312.85 L608.3,317.6 L610.3,324.6 L612.3,329.6 L614.6,333.1 L616.3,332.1 L619.3,330.1 L620,329.5 L625,326.4 L632,325.1 L645,324.7 L664,323.3 L672,322.7 L686,323.1 L700,323.1 L708,323.7 L720,322.5 L735,322.8 L752,322.1 L765,322.8 L780,322.7 L800,322.9 L831,322.7" stroke="#4a9e3c" stroke-width="0.95" fill="none"/><path d="M598.5,321V332M624.9,321V332" stroke="#9a2828" stroke-width="1.1"/><text x="829" y="361.3" text-anchor="end" class="lbl" fill="#8a8a8a" font-size="7" textLength="30.31" lengthAdjust="spacingAndGlyphs">Medianus S</text><rect x="832" y="14" width="1" height="517" fill="#ececec"/></svg><div class="abs" style="left:167px;top:517px;width:665px;height:14px;background:#eeeeee"></div><div class="abs" style="left:168px;top:519.3px;width:51.6px;height:10.2px;box-sizing:border-box;background:#f0f0f0;border:1px solid #fafafa;border-right-color:#999;border-bottom-color:#a8a8a8"></div><div class="abs" style="left:221.3px;top:519.5px;width:50.6px;height:11.5px;box-sizing:border-box;background:#f8f8f8;border:1px solid #999;border-right-color:#fff;border-bottom-color:#fff"></div><div class="abs" style="left:274px;top:518px;width:558px;height:12.5px;box-sizing:border-box;background:#f6f6f6;border:1px solid #c8c8c8;border-right-color:#fff;border-bottom-color:#fff"></div><div class="t menu" style="left:175px;top:521px">Объединенный</div><div class="t menu" style="left:231px;top:521px">Раздельный</div><div class="t menu" style="left:275.2px;top:520.9px">Пациент: иванов</div></body></html>
